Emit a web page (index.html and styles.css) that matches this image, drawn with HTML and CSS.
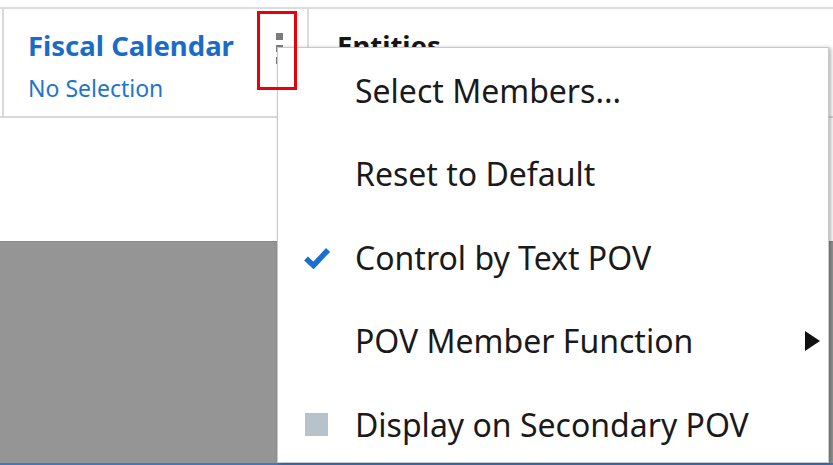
FILE: index.html
```html
<!DOCTYPE html>
<html>
<head>
<meta charset="utf-8">
<link rel="stylesheet" href="styles.css">
</head>
<body>
<div class="app">
  <div class="topgap"></div>
  <div class="povbar">
    <div class="pov-cell pov-cell-first">
      <div class="pov-text">
        <div class="pov-title">Fiscal Calendar</div>
        <div class="pov-value">No Selection</div>
      </div>
      <div class="kebab"><span></span><span></span><span></span></div>
    </div>
    <div class="pov-cell pov-cell-second">
      <div class="pov-title dark">Entities</div>
    </div>
  </div>
  <div class="blank"></div>
  <div class="overlay"></div>
  <div class="bottomline"></div>
</div>

<div class="menu">
  <div class="menu-item"><span class="mi-icon"></span><span class="mi-label">Select Members...</span></div>
  <div class="menu-item"><span class="mi-icon"></span><span class="mi-label">Reset to Default</span></div>
  <div class="menu-item"><span class="mi-icon"><svg width="26" height="22" viewBox="0 0 26 22"><polyline points="2,11.5 9.5,18.5 24,3" fill="none" stroke="#1b6fd1" stroke-width="5.5"/></svg></span><span class="mi-label">Control by Text POV</span></div>
  <div class="menu-item"><span class="mi-icon"></span><span class="mi-label">POV Member Function</span><svg class="mi-arrow" width="15" height="20" viewBox="0 0 15 20"><polygon points="0,0 15,10 0,20" fill="#111"/></svg></div>
  <div class="menu-item"><span class="mi-icon"><span class="sq"></span></span><span class="mi-label">Display on Secondary POV</span></div>
</div>

<div class="highlight"></div>
</body>
</html>
```
FILE: styles.css
```css
html, body {
  margin: 0;
  padding: 0;
}
body {
  width: 833px;
  height: 465px;
  overflow: hidden;
  position: relative;
  background: #fff;
  font-family: "Noto Sans", "Open Sans", sans-serif;
}
.app {
  display: flex;
  flex-direction: column;
  height: 465px;
}
.topgap {
  height: 7px;
  flex: none;
}
.povbar {
  flex: none;
  height: 107px;
  border-top: 2px solid #dcdcdc;
  border-bottom: 2px solid #d9d9d9;
  display: flex;
}
.pov-cell {
  display: flex;
  box-sizing: border-box;
}
.pov-cell-first {
  width: 307px;
  margin-left: 2px;
  border-left: 2px solid #d9d9d9;
  border-right: 2px solid #dcdcdc;
  padding: 20px 24px 0 24px;
}
.pov-cell-second {
  flex: 1;
  padding: 20px 0 0 28px;
}
.pov-text {
  display: flex;
  flex-direction: column;
}
.pov-title {
  font-weight: 700;
  font-size: 27.5px;
  line-height: 34px;
  color: #1a6cc6;
  white-space: nowrap;
}
.pov-title.dark {
  color: #161616;
}
.pov-value {
  margin-top: 11px;
  font-size: 23px;
  line-height: 28px;
  color: #1f74cc;
  white-space: nowrap;
}
.kebab {
  margin-left: auto;
  margin-top: 4px;
  display: flex;
  flex-direction: column;
  gap: 5px;
}
.kebab span {
  display: block;
  width: 7px;
  height: 7px;
  background: #7c7c7c;
}
.blank {
  flex: none;
  height: 123px;
}
.overlay {
  flex: 1;
  background: #959595;
  border-top: 1px solid #8a8a8a;
}
.bottomline {
  flex: none;
  height: 2px;
  background: #3f78c6;
}
.menu {
  position: absolute;
  left: 277px;
  top: 47px;
  width: 552px;
  bottom: 2px;
  box-sizing: border-box;
  background: #fff;
  border: 1px solid #c9c9c9;
  box-shadow: 2px 1px 4px rgba(0, 0, 0, 0.3);
  padding-top: 1px;
  z-index: 2;
}
.menu-item {
  height: 83.5px;
  display: flex;
  align-items: center;
}
.mi-icon {
  width: 77px;
  flex: none;
  display: flex;
  justify-content: center;
  align-items: center;
}
.mi-icon svg {
  display: block;
}
.sq {
  display: block;
  width: 23px;
  height: 23px;
  background: #b8c2cb;
}
.mi-label {
  flex: 1;
  font-size: 32px;
  line-height: 32px;
  color: #1a1a1a;
  white-space: nowrap;
}
.mi-arrow {
  flex: none;
  margin-right: 8px;
}
.highlight {
  position: absolute;
  left: 257px;
  top: 11px;
  width: 40px;
  height: 79px;
  box-sizing: border-box;
  border: 3px solid #e8000a;
  z-index: 3;
}
```
